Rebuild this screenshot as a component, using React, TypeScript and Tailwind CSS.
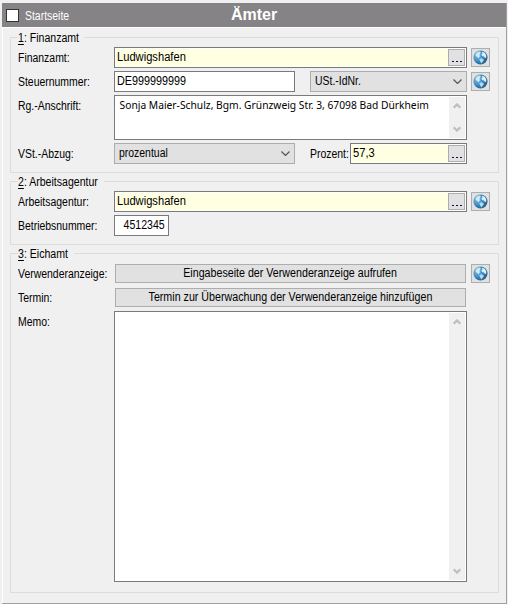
import type { ReactNode } from "react"
import clsx from "clsx"

// Narrow grotesk used for nearly every label on the form
function Txt({ children, className }: { children: ReactNode; className?: string }) {
  return (
    <span className={clsx("inline-block whitespace-nowrap", className ?? "origin-left scale-x-[0.87]")}>
      {children}
    </span>
  )
}

function Group({ hotkey, title, legendWidth, className, children }: {
  hotkey: string
  title: string
  legendWidth: string
  className?: string
  children: ReactNode
}) {
  return (
    <section className={clsx("relative border border-[#dcdcdc] pl-[7px]", className)}>
      <h2 className={clsx("absolute -top-[8px] left-[7px] h-4 bg-[#f0f0f0] leading-4", legendWidth)}>
        <Txt className="origin-left scale-x-[0.88]"><span className="underline underline-offset-2">{hotkey}</span>: {title}</Txt>
      </h2>
      {children}
    </section>
  )
}

function Row({ label, height = "h-[21px]", children }: { label: string; height?: string; children: ReactNode }) {
  return (
    <div className={clsx("flex", height)}>
      <div className="w-24 shrink-0 leading-[22px]"><Txt>{label}</Txt></div>
      {children}
    </div>
  )
}

function Lookup({ value, width }: { value: string; width: string }) {
  return (
    <div className={clsx("flex h-[21px] items-center justify-between border border-[#7a7a7a] bg-[#ffffe1] pr-px pl-[2px] shadow-[inset_0_0_0_1px_#fff]", width)}>
      <span className="leading-[19px]"><Txt className="origin-left scale-x-[0.93]">{value}</Txt></span>
      <button className="flex h-[17px] w-[17px] items-end justify-center gap-[2px] border border-[#adadad] bg-[#e1e1e1] pb-[3px]">
        <i className="h-px w-[2px] bg-[#101050]" />
        <i className="h-px w-[2px] bg-[#101050]" />
        <i className="h-px w-[2px] bg-[#101050]" />
      </button>
    </div>
  )
}

function Combo({ value, width }: { value: string; width: string }) {
  return (
    <div className={clsx("flex h-[21px] items-center justify-between border border-[#adadad] bg-[#e1e1e1] pr-1 pl-1", width)}>
      <span className="leading-[21px]"><Txt>{value}</Txt></span>
      <svg className="h-[5px] w-[9px]" viewBox="0 0 9 5" fill="none" stroke="#555" strokeWidth="1.2">
        <path d="M.5.5l4 4 4-4" />
      </svg>
    </div>
  )
}

function Globe() {
  return (
    <button className="ml-1 flex h-[19px] w-[19px] shrink-0 items-center justify-center border border-[#adadad] bg-[#e1e1e1]">
      <svg className="h-[15px] w-[15px]" viewBox="0 0 15 15">
        <defs>
          <radialGradient id="sea" cx="28%" cy="35%" r="80%">
            <stop offset="0" stopColor="#86c2e6" />
            <stop offset=".5" stopColor="#3a8cc2" />
            <stop offset="1" stopColor="#1f5580" />
          </radialGradient>
        </defs>
        <circle cx="7.5" cy="7.5" r="7" fill="url(#sea)" />
        <path d="M3 3.4 5 1.8 7.2 1.4l.6 1.4-1.4 1.8L7 6 5.6 8.2 4 6.8 2.6 5.6z" fill="#d3e8f4" />
        <path d="M9 1.8l2.4.8 1.7 2.2.2 2.4-1.3 1-1-1.8-1.8-.4-.8-1.8 1-.8z" fill="#dceef7" />
        <path d="M6.2 9.2l2-.9 2.2.8.2 1.6-1.2 1.3-.6 1.4-1.4-1.4z" fill="#b4d8ec" />
      </svg>
    </button>
  )
}

function Chevron({ down }: { down?: boolean }) {
  return (
    <svg className={clsx("h-[6px] w-[8px]", down && "rotate-180")} viewBox="0 0 8 6" fill="none" stroke="#bfbfbf" strokeWidth="2.2">
      <path d="M.7 4.7 4 1.4l3.3 3.3" />
    </svg>
  )
}

function Memo({ height, children }: { height: string; children?: ReactNode }) {
  return (
    <div className={clsx("flex w-[353px] justify-between border border-[#7a7a7a] bg-white p-px", height)}>
      <p className="w-80 origin-left scale-x-[0.893] pl-1 font-['Noto_Sans',sans-serif] text-[11.5px] leading-4 whitespace-nowrap">
        {children}
      </p>
      <div className="flex w-4 shrink-0 flex-col items-center justify-between bg-[#f0f0f0] py-[6px]">
        <Chevron />
        <Chevron down />
      </div>
    </div>
  )
}

function WideButton({ children }: { children: ReactNode }) {
  return (
    <button className="mr-px ml-px h-[19px] w-[351px] border border-[#adadad] bg-[#e1e1e1] leading-[17px]">
      <Txt className="origin-center scale-x-[0.89]">{children}</Txt>
    </button>
  )
}

export default function App() {
  return (
    <div className="h-[604px] w-[508px] bg-[#f0f0f0] pt-[3px] pl-[2px] font-['Liberation_Sans',sans-serif] text-[12px] text-black">
      <div className="flex h-[601px] w-[505px] flex-col border-r border-b border-[#a0a0a0]">
        <header className="relative flex h-6 shrink-0 items-center bg-[#868386] pl-1 text-white">
          <span className="h-[13px] w-[13px] border border-[#333] bg-white" />
          <span className="ml-[6px] pt-px"><Txt>Startseite</Txt></span>
          <h1 className="absolute inset-x-0 top-0 text-center text-[16px] leading-[23px] font-bold">Ämter</h1>
        </header>

        <main className="flex-1 border-t border-l border-white pt-[9px] pl-[7px]">
          <Group hotkey="1" title="Finanzamt" legendWidth="w-[66px]" className="h-[136px] w-[489px] pt-[9px]">
            <div className="flex flex-col gap-[3px]">
              <Row label="Finanzamt:">
                <Lookup value="Ludwigshafen" width="w-[353px]" />
                <div className="pt-px"><Globe /></div>
              </Row>
              <Row label="Steuernummer:">
                <div className="w-[181px] border border-[#7a7a7a] bg-white pl-[2px] leading-[19px]">
                  <Txt className="origin-left scale-x-[0.9]">DE999999999</Txt>
                </div>
                <div className="ml-[15px]"><Combo value="USt.-IdNr." width="w-[157px]" /></div>
                <div className="pt-px"><Globe /></div>
              </Row>
              <Row label="Rg.-Anschrift:" height="h-[45px]">
                <Memo height="h-[45px]">Sonja Maier-Schulz, Bgm. Grünzweig Str. 3, 67098 Bad Dürkheim</Memo>
              </Row>
              <Row label="VSt.-Abzug:">
                <Combo value="prozentual" width="w-[181px]" />
                <div className="ml-[15px] w-10 leading-[22px]"><Txt>Prozent:</Txt></div>
                <Lookup value="57,3" width="w-[117px]" />
              </Row>
            </div>
          </Group>

          <Group hotkey="2" title="Arbeitsagentur" legendWidth="w-[86px]" className="mt-2 h-16 w-[489px] pt-[9px]">
            <div className="flex flex-col gap-[3px]">
              <Row label="Arbeitsagentur:">
                <Lookup value="Ludwigshafen" width="w-[353px]" />
                <div className="pt-px"><Globe /></div>
              </Row>
              <Row label="Betriebsnummer:">
                <div className="w-[55px] border border-[#7a7a7a] bg-white pr-[3px] text-right leading-[19px]">
                  <Txt className="origin-right scale-x-[0.88]">4512345</Txt>
                </div>
              </Row>
            </div>
          </Group>

          <Group hotkey="3" title="Eichamt" legendWidth="w-[56px]" className="mt-2 h-[340px] w-[489px] pt-[9px]">
            <div className="flex flex-col gap-[3px]">
              <Row label="Verwenderanzeige:">
                <div className="pt-px"><WideButton>Eingabeseite der Verwenderanzeige aufrufen</WideButton></div>
                <div className="pt-px"><Globe /></div>
              </Row>
              <Row label="Termin:">
                <div className="pt-px"><WideButton>Termin zur Überwachung der Verwenderanzeige hinzufügen</WideButton></div>
              </Row>
              <Row label="Memo:" height="h-[271px]">
                <Memo height="h-[271px]" />
              </Row>
            </div>
          </Group>
        </main>
      </div>
    </div>
  )
}
